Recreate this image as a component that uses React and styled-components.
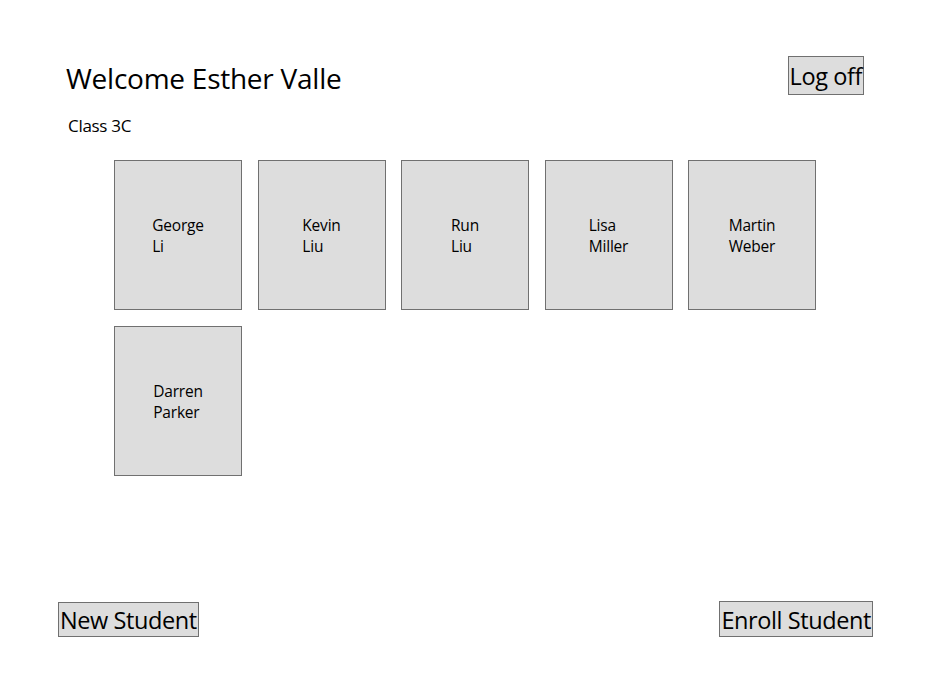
import React from "react";
import styled, { createGlobalStyle } from "styled-components";

const Global = createGlobalStyle`
  html, body { margin: 0; padding: 0; background: #ffffff; }
  body { font-family: "Open Sans", "Noto Sans", sans-serif; color: #000; }
  #root { min-height: 100vh; }
`;

const Page = styled.div`
  height: 689px;
  box-sizing: border-box;
  display: flex;
  flex-direction: column;
  padding: 56px 64px 52px 58px;
`;

const Header = styled.div`
  display: flex;
  justify-content: space-between;
  align-items: flex-start;
  padding-left: 8px;
  padding-right: 9px;
`;

const Title = styled.h1`
  margin: 3px 0 0 0;
  font-weight: 400;
  font-size: 28px;
  line-height: 38px;
  letter-spacing: -0.25px;
`;

const Button = styled.button`
  font-family: "Open Sans", "Noto Sans", sans-serif;
  font-size: 23.5px;
  line-height: 1;
  height: ${(p) => p.$h || 35}px;
  padding: 3px 1px 0 1px;
  background: #dddddd;
  border: 1px solid #707070;
  color: #000;
  border-radius: 0;
  letter-spacing: -0.4px;
`;

const ClassLabel = styled.div`
  margin: 17px 0 0 10px;
  font-size: 17px;
  line-height: 24px;
  letter-spacing: -0.3px;
`;

const Grid = styled.div`
  display: flex;
  flex-wrap: wrap;
  gap: 16px 15.5px;
  margin: 22px 0 0 56px;
  width: 702px;
`;

const Tile = styled.div`
  width: 128px;
  height: 150px;
  box-sizing: border-box;
  padding-top: 2px;
  background: #dddddd;
  border: 1px solid #707070;
  display: flex;
  align-items: center;
  justify-content: center;
`;

const Name = styled.div`
  font-size: 15.5px;
  line-height: 21px;
  letter-spacing: -0.2px;
  text-align: left;
`;

const Footer = styled.div`
  margin-top: auto;
  display: flex;
  justify-content: space-between;
  align-items: flex-end;
`;

const students = [
  ["George", "Li"],
  ["Kevin", "Liu"],
  ["Run", "Liu"],
  ["Lisa", "Miller"],
  ["Martin", "Weber"],
  ["Darren", "Parker"],
];

export default function App() {
  return (
    <>
      <Global />
      <Page>
        <Header>
          <Title>Welcome Esther Valle</Title>
          <Button $h={39}>Log off</Button>
        </Header>
        <ClassLabel>Class 3C</ClassLabel>
        <Grid>
          {students.map(([f, l]) => (
            <Tile key={f + l}>
              <Name>
                {f}
                <br />
                {l}
              </Name>
            </Tile>
          ))}
        </Grid>
        <Footer>
          <Button $h={35}>New Student</Button>
          <Button $h={36}>Enroll Student</Button>
        </Footer>
      </Page>
    </>
  );
}
